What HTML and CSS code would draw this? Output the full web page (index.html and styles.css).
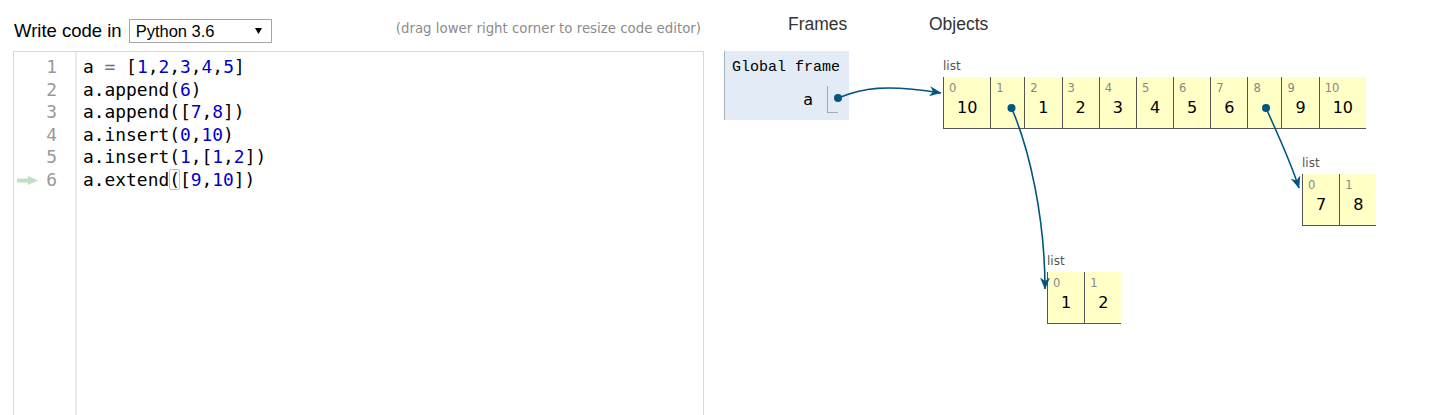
FILE: index.html
```html
<!DOCTYPE html>
<html>
<head>
<meta charset="utf-8">
<title>Python Tutor</title>
<link rel="stylesheet" href="styles.css">
</head>
<body>
<div class="page">
  <section class="left">
    <div class="toolbar">
      <span class="lang-label">Write code in</span>
      <div class="select"><span>Python 3.6</span><svg class="caret" width="7" height="6" viewBox="0 0 7 6"><path d="M0,0 H7 L3.5,6 Z"/></svg></div>
      <span class="hint">(drag lower right corner to resize code editor)</span>
    </div>
    <div class="editor">
      <div class="gutter">
        <div class="ln">1</div>
        <div class="ln">2</div>
        <div class="ln">3</div>
        <div class="ln">4</div>
        <div class="ln">5</div>
        <div class="ln"><svg class="cur-arrow" width="21" height="9" viewBox="0 0 21 9"><path d="M0,2.5 H11 V0 L21,4.5 L11,9 V6.5 H0 Z"/></svg>6</div>
      </div>
      <div class="code">
        <div class="line">a <span class="op">=</span> [<span class="num">1</span>,<span class="num">2</span>,<span class="num">3</span>,<span class="num">4</span>,<span class="num">5</span>]</div>
        <div class="line">a.append(<span class="num">6</span>)</div>
        <div class="line">a.append([<span class="num">7</span>,<span class="num">8</span>])</div>
        <div class="line">a.insert(<span class="num">0</span>,<span class="num">10</span>)</div>
        <div class="line">a.insert(<span class="num">1</span>,[<span class="num">1</span>,<span class="num">2</span>])</div>
        <div class="line">a.extend<span class="match">(</span>[<span class="num">9</span>,<span class="num">10</span>])</div>
      </div>
    </div>
  </section>

  <section class="viz">
    <div class="viz-head"><span class="h-frames">Frames</span><span class="h-objects">Objects</span></div>
    <div class="frame">
      <div class="frame-title">Global frame</div>
      <div class="frame-vars">
        <span class="var-name">a</span>
        <span class="var-val"></span>
      </div>
    </div>

    <div class="list l1">
      <div class="type-label">list</div>
      <div class="cells">
        <div class="cell"><div class="idx">0</div><div class="val">10</div></div>
        <div class="cell ptr"><div class="idx">1</div><div class="val"></div></div>
        <div class="cell"><div class="idx">2</div><div class="val">1</div></div>
        <div class="cell"><div class="idx">3</div><div class="val">2</div></div>
        <div class="cell"><div class="idx">4</div><div class="val">3</div></div>
        <div class="cell"><div class="idx">5</div><div class="val">4</div></div>
        <div class="cell"><div class="idx">6</div><div class="val">5</div></div>
        <div class="cell"><div class="idx">7</div><div class="val">6</div></div>
        <div class="cell ptr"><div class="idx">8</div><div class="val"></div></div>
        <div class="cell"><div class="idx">9</div><div class="val">9</div></div>
        <div class="cell"><div class="idx">10</div><div class="val">10</div></div>
      </div>
    </div>

    <div class="list l2">
      <div class="type-label">list</div>
      <div class="cells">
        <div class="cell"><div class="idx">0</div><div class="val">7</div></div>
        <div class="cell"><div class="idx">1</div><div class="val">8</div></div>
      </div>
    </div>

    <div class="list l3">
      <div class="type-label">list</div>
      <div class="cells">
        <div class="cell"><div class="idx">0</div><div class="val">1</div></div>
        <div class="cell"><div class="idx">1</div><div class="val">2</div></div>
      </div>
    </div>

    <svg class="arrows" width="723" height="415" viewBox="724 0 723 415">
      <defs>
        <marker id="ah" viewBox="0 0 12 10" refX="11.5" refY="5" markerWidth="12" markerHeight="10" markerUnits="userSpaceOnUse" orient="auto">
          <path d="M0,0 L12,5 L0,10 L3.5,5 Z" fill="#005583"/>
        </marker>
      </defs>
      <g fill="none" stroke="#005583" stroke-width="1.6">
        <path d="M838,98 C862,88 885,84 941,93" marker-end="url(#ah)"/>
        <path d="M1011.5,108 C1030,150 1045,220 1045,289" marker-end="url(#ah)"/>
        <path d="M1266,108 C1278,135 1290,160 1299,188" marker-end="url(#ah)"/>
      </g>
      <g fill="#005583">
        <circle cx="838" cy="98" r="4"/>
        <circle cx="1011.5" cy="108" r="4"/>
        <circle cx="1266" cy="108" r="4"/>
      </g>
    </svg>
  </section>
</div>
</body>
</html>
```

FILE: styles.css
```css
html, body {
  margin: 0;
  padding: 0;
  overflow: hidden;
  background: #ffffff;
}

body {
  font-family: "Liberation Sans", Arial, sans-serif;
  color: #000;
  width: 1447px;
  height: 415px;
}

.page {
  display: flex;
  align-items: flex-start;
}

/* ---------- left: editor ---------- */
.left {
  flex: none;
  margin-left: 13px;
  width: 691px;
}

.toolbar {
  display: flex;
  align-items: center;
  padding-top: 19px;
  height: 24px;
}

.lang-label {
  font-size: 18.5px;
  margin-left: 1px;
  margin-right: 7px;
  white-space: nowrap;
}

.select {
  box-sizing: border-box;
  width: 143px;
  height: 24px;
  border: 1px solid #a6a6a6;
  background: #fff;
  display: flex;
  align-items: center;
  padding-left: 6px;
  font-size: 16.5px;
}

.select .caret {
  margin-left: auto;
  margin-right: 9px;
}

.hint {
  margin-left: auto;
  margin-right: 3px;
  margin-top: -5px;
  font-family: "DejaVu Sans", Verdana, sans-serif;
  font-size: 13.33px;
  color: #8c8c8c;
  white-space: nowrap;
}

.editor {
  box-sizing: border-box;
  margin-top: 8px;
  height: 364px;
  border: 1px solid #d9d9d9;
  border-bottom: none;
  display: flex;
  font-family: "DejaVu Sans Mono", monospace;
  font-size: 17.9px;
  line-height: 22.6px;
}

.gutter {
  flex: none;
  width: 61px;
  border-right: 2px solid #ebebeb;
  padding-top: 4px;
  color: #999;
}

.ln {
  display: flex;
  align-items: center;
  justify-content: flex-end;
  padding-right: 18px;
  height: 22.6px;
}

.cur-arrow {
  margin-right: auto;
  margin-left: 3px;
  fill: #c3dfc3;
}

.code {
  padding-left: 6px;
  padding-top: 4px;
  color: #000;
}

.line {
  white-space: pre;
  height: 22.6px;
}

.num {
  color: #0000cd;
}

.op {
  color: #687687;
}

.match {
  box-shadow: inset 0 0 0 1px #c0c0c0;
  border-radius: 2px;
}

/* ---------- right: visualisation ---------- */
.viz {
  position: relative;
  flex: none;
  margin-left: 20px;
  width: 723px;
  height: 415px;
}

.viz-head {
  display: flex;
  padding-top: 14px;
  height: 20px;
  line-height: 20px;
  font-size: 17.5px;
  color: #333;
}

.h-frames {
  margin-left: 64px;
  width: 141px;
}

.frame {
  box-sizing: border-box;
  margin-top: 17px;
  width: 125px;
  background: #e2ebf6;
  border-left: 1px solid #a6b3b6;
  padding: 8px 11px 7px 7px;
}

.frame-title {
  font-family: "Liberation Mono", monospace;
  font-size: 15px;
  line-height: 18px;
  white-space: nowrap;
}

.frame-vars {
  margin-top: 9px;
  display: flex;
  justify-content: flex-end;
  align-items: center;
}

.var-name {
  font-family: "DejaVu Sans", sans-serif;
  font-size: 16px;
  padding-right: 14px;
}

.var-val {
  width: 10px;
  height: 26px;
  border-left: 1px solid #aaa;
  border-bottom: 1px solid #aaa;
}

.list {
  position: absolute;
}

.l1 { left: 219px; top: 58px; }
.l2 { left: 578px; top: 155px; }
.l3 { left: 323px; top: 253px; }

.type-label {
  font-family: "DejaVu Sans", sans-serif;
  font-size: 12px;
  line-height: 16px;
  margin-bottom: 3px;
  color: #555;
}

.cells {
  display: flex;
  background: #ffffc6;
}

.cell {
  border-left: 1px solid #555;
  border-bottom: 1px solid #555;
  padding: 4px 13px 10px;
  font-family: "DejaVu Sans", sans-serif;
}

.idx {
  margin-left: -8px;
  font-size: 11.5px;
  line-height: 14px;
  color: #888;
  white-space: nowrap;
}

.val {
  margin-top: 3px;
  font-size: 16px;
  line-height: 20px;
  text-align: center;
  min-height: 20px;
}

.ptr .val {
  width: 7px;
}

.arrows {
  position: absolute;
  left: 0;
  top: 0;
  pointer-events: none;
}
```
